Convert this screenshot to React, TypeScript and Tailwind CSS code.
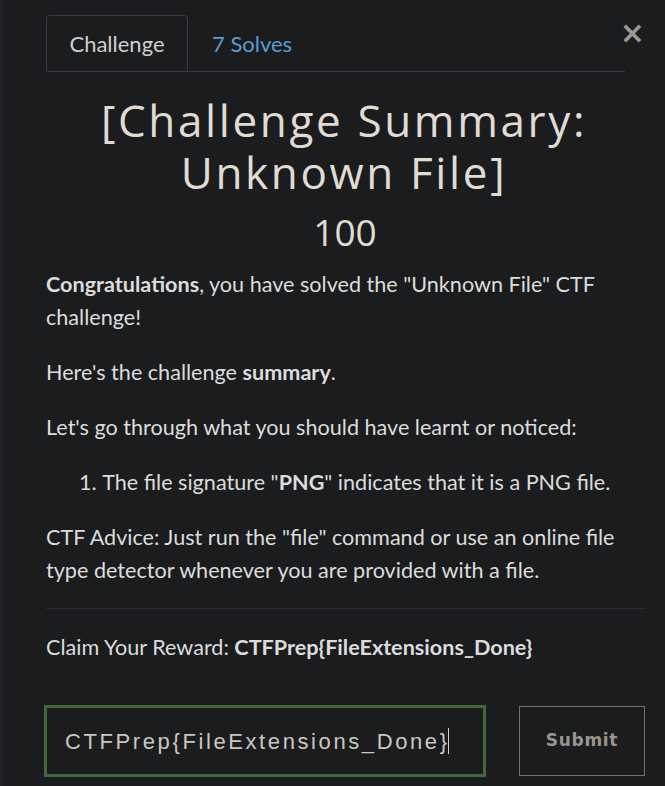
import React from 'react';

const App = () => {
  return (
    <div className="min-h-[786px] w-[665px] bg-[#1b1c1e] border-l-[3px] border-[#232427] text-[#d6d6d6] font-['Lato',sans-serif] overflow-hidden">
      <div className="relative pl-[43px] pr-[40px] pt-[15px]">
        <button className="absolute right-[20px] top-[18px] text-[30px] leading-none font-bold text-[#9a9a9a] font-['DejaVu_Sans',sans-serif]">
          ×
        </button>

        {/* tabs */}
        <div className="flex border-b border-[#3a3b3e]">
          <div className="h-[56px] -mb-px w-[142px] flex items-center justify-center border border-[#3a3b3e] border-b-[#1b1c1e] rounded-t-[4px] text-[22px] text-[#cfcfcf]">
            Challenge
          </div>
          <div className="h-[56px] pl-[24px] flex items-center text-[22px] text-[#5b9bd5]">7 Solves</div>
        </div>

        <h1 className="mt-[22px] pl-[17px] text-center text-[44px] leading-[52px] tracking-[0.06em] text-[#e0dcd4] font-['Open_Sans',sans-serif] font-normal">
          [Challenge Summary:
          <br />
          Unknown File]
        </h1>
        <div className="mt-[10px] pl-[19px] text-center text-[37px] leading-[48px] text-[#e0dcd4] font-['Open_Sans',sans-serif] font-normal">
          100
        </div>

        <div className="mt-[12px] -mr-[4px] text-[21.6px] leading-[33px] text-[#dcdcdc]">
          <p className="mb-[22px]">
            <b className="font-bold">Congratulations</b>, you have solved the "Unknown File" CTF challenge!
          </p>
          <p className="mb-[22px]">
            Here's the challenge <b className="font-bold">summary</b>.
          </p>
          <p className="mb-[22px]">Let's go through what you should have learnt or noticed:</p>
          <ol className="mb-[22px] pl-[33px] list-decimal list-inside">
            <li>
              The file signature "<b className="font-bold">PNG</b>" indicates that it is a PNG file.
            </li>
          </ol>
          <p className="mb-[21px]">
            CTF Advice: Just run the "file" command or use an online file type detector whenever you are provided with a
            file.
          </p>
          <hr className="border-0 border-t border-[#2c2d30] -mr-[16px]" />
          <p className="mt-[22px]">
            Claim Your Reward: <b className="font-bold">CTFPrep{'{'}FileExtensions_Done{'}'}</b>
          </p>
        </div>

        <div className="mt-[41px] flex items-center gap-[33px] -ml-[2px] -mr-[20px]">
          <div className="w-[442px] shrink-0 h-[72px] border-[3px] border-[#45653a] flex items-center pl-[18px]">
            <span className="text-[22px] tracking-[2.6px] text-[#cbc7c0] font-['Liberation_Sans',sans-serif]">
              CTFPrep{'{'}FileExtensions_Done{'}'}
            </span>
            <span className="-ml-[2px] w-px h-[26px] bg-[#d0d0d0]" />
          </div>
          <button className="w-[126px] shrink-0 h-[70px] border border-[#707070] text-[17px] font-bold tracking-[0.04em] text-[#9a968f] font-['DejaVu_Sans',sans-serif]">
            Submit
          </button>
        </div>
      </div>
    </div>
  );
};

export default App;
